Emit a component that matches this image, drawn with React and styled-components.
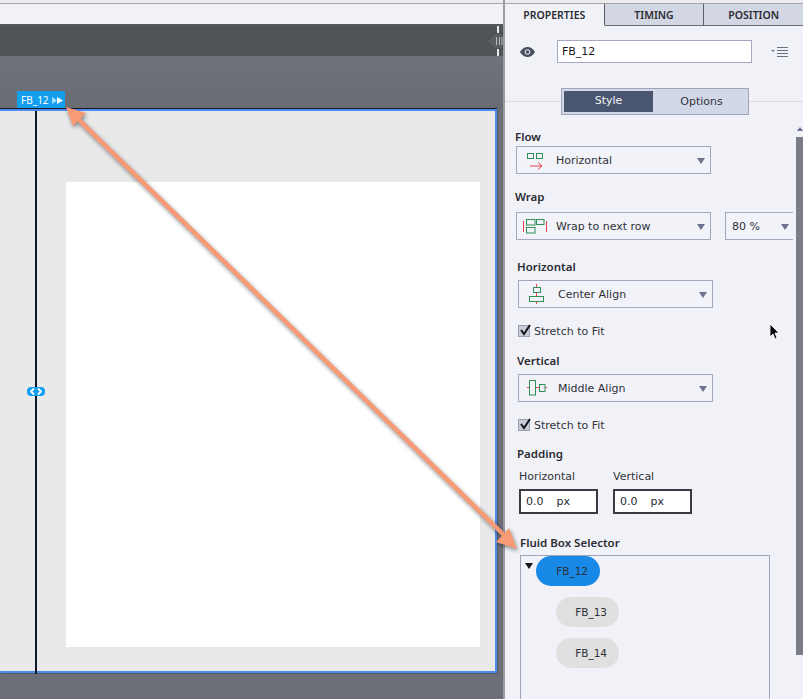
import styled, { createGlobalStyle } from "styled-components";

const GlobalStyle = createGlobalStyle`
  html, body {
    margin: 0;
    padding: 0;
    background: #6c6f77;
  }
  * {
    box-sizing: border-box;
  }
`;

const FONT = `"DejaVu Sans", "Noto Sans", "Liberation Sans", sans-serif`;
const HEADING_FONT = `"Noto Sans", "Open Sans", "Liberation Sans", sans-serif`;

const Page = styled.div`
  position: relative;
  width: 803px;
  height: 699px;
  display: flex;
  overflow: hidden;
  font-family: ${FONT};
  color: #2b2c33;
`;

const Stage = styled.div`
  width: 505px;
  display: flex;
  flex-direction: column;
  background: #6c6f77;
  border-right: 2px solid #999ba1;
`;

const TopStrip = styled.div`
  height: 26px;
  background: linear-gradient(#ececef 0 3px, #a5a6aa 3px 4px, #f1f2f7 4px);
  border-bottom: 2px solid #55585c;
`;

const DarkBar = styled.div`
  position: relative;
  height: 30px;
  background: #505357;
`;

const CollapseHandle = styled.svg`
  position: absolute;
  right: 0;
  top: 0;
`;

const Ruler = styled.div`
  height: 53px;
  background: linear-gradient(#6f7279, #696c73);
  position: relative;
`;

const FlexTag = styled.div`
  position: absolute;
  left: 17px;
  bottom: 0;
  width: 48px;
  height: 18px;
  display: flex;
  align-items: center;
  gap: 3px;
  padding-left: 4px;
  background: #139fee;
  color: #fff;
  font-family: ${HEADING_FONT};
  font-size: 10px;
`;

const Canvas = styled.div`
  position: relative;
  width: 497px;
  height: 564px;
  background: #e9e9e9;
  border: solid #4f8cf2;
  border-width: 2px 2px 2px 0;
  box-shadow: 0 -1px 0 #15181f, 1px 1px 0 #55585f;
  padding: 71px 15px 24px 66px;
`;

const Artboard = styled.div`
  width: 100%;
  height: 100%;
  background: #fff;
`;

const Guide = styled.div`
  position: absolute;
  left: 35px;
  top: 0;
  bottom: -3px;
  width: 2px;
  background: #0e1a2b;
`;

const GuideKnob = styled.svg`
  position: absolute;
  left: 27px;
  top: 276px;
`;

const Panel = styled.div`
  position: relative;
  width: 298px;
  display: flex;
  flex-direction: column;
  background: #f1f2f8;
  & > * {
    flex-shrink: 0;
  }
`;

const Tabs = styled.div`
  display: flex;
  height: 26px;
  padding-top: 3px;
  background: #ececef;
`;

const Tab = styled.div`
  flex: 1;
  display: flex;
  align-items: center;
  justify-content: center;
  font-family: ${HEADING_FONT};
  font-size: 10.5px;
  font-weight: 600;
  background: ${(p) => (p.$active ? "#f1f2f8" : "#d3d7e4")};
  border-top: 1px solid #a5a6aa;
  border-right: 1px solid #5e6066;
  border-bottom: 1px solid ${(p) => (p.$active ? "#f1f2f8" : "#6b6d75")};
  &:last-child {
    border-right: 0;
  }
`;

const NameRow = styled.div`
  display: flex;
  align-items: flex-start;
  height: 62px;
  padding: 14px 0 0 15px;
`;

const EyeIcon = styled.svg`
  margin: 7px 22px 0 0;
`;

const NameInput = styled.div`
  width: 195px;
  height: 23px;
  display: flex;
  align-items: center;
  padding-left: 4px;
  background: #fff;
  border: 1px solid #a3a8be;
  font-size: 11px;
  color: #16171c;
`;

const MenuIcon = styled.svg`
  margin: 7px 0 0 19px;
`;

const SegmentRow = styled.div`
  position: relative;
  display: flex;
  justify-content: center;
  margin-left: 56px;
  &::before {
    content: "";
    position: absolute;
    left: -56px;
    right: 0;
    top: 13px;
    height: 1px;
    background: #dcdde2;
  }
`;

const Segmented = styled.div`
  position: relative;
  width: 188px;
  height: 27px;
  margin-right: 54px;
  display: flex;
  padding: 2px;
  background: #d3d8e9;
  border: 1px solid #a0a5bc;
`;

const Segment = styled.div`
  flex: ${(p) => (p.$active ? "0 0 89px" : 1)};
  display: flex;
  align-items: center;
  justify-content: center;
  padding-bottom: ${(p) => (p.$active ? 2 : 0)}px;
  padding-left: ${(p) => (p.$active ? 0 : 4)}px;
  font-size: 11px;
  background: ${(p) => (p.$active ? "#4a556f" : "transparent")};
  color: ${(p) => (p.$active ? "#f2f3f7" : "#33353d")};
`;

const Label = styled.div`
  height: 14px;
  line-height: 14px;
  margin-top: ${(p) => p.$top}px;
  margin-left: ${(p) => p.$left}px;
  font-family: ${HEADING_FONT};
  font-size: 11.5px;
  font-weight: 600;
  color: #2a2b32;
`;

const ControlRow = styled.div`
  display: flex;
  gap: 14px;
  margin-top: ${(p) => p.$top}px;
  margin-left: ${(p) => p.$left}px;
`;

const Select = styled.div`
  position: relative;
  width: ${(p) => p.$width}px;
  height: 28px;
  display: flex;
  align-items: center;
  padding-left: ${(p) => p.$pad}px;
  background: #f2f3f8;
  border: 1px solid #a3a8be;
  border-right-width: ${(p) => (p.$open ? 0 : 1)}px;
  font-size: 11px;
  color: #2f3038;
  &::after {
    content: "";
    position: absolute;
    right: ${(p) => (p.$open ? 4 : 5)}px;
    top: 11px;
    border: 4px solid transparent;
    border-top: 6px solid #6c7290;
    border-bottom: 0;
  }
`;

const SelectIcon = styled.svg`
  flex: none;
  margin-right: ${(p) => p.$gap}px;
`;

const CheckRow = styled.div`
  display: flex;
  align-items: center;
  gap: 4px;
  height: 12px;
  margin-top: 17px;
  margin-left: 13px;
  font-size: 11px;
  color: #33343b;
`;

const CheckBox = styled.div`
  position: relative;
  width: 12px;
  height: 12px;
  background: #c9ccd8;
  border: 1px solid #9b9fb2;
`;

const CheckMark = styled.svg`
  position: absolute;
  left: -1px;
  top: -3px;
`;

const PaddingRow = styled.div`
  display: flex;
  gap: 15px;
  margin-top: 9px;
  margin-left: 14px;
`;

const PaddingField = styled.div`
  width: 79px;
`;

const SubLabel = styled.div`
  height: 14px;
  line-height: 14px;
  font-size: 11px;
  color: #33343b;
`;

const PaddingInput = styled.div`
  display: flex;
  align-items: center;
  gap: 13px;
  height: 25px;
  margin-top: 5px;
  padding-left: 5px;
  background: #fff;
  border: 2px solid #3a3b40;
  font-size: 11px;
  color: #2b2c33;
`;

const Tree = styled.div`
  position: relative;
  width: 250px;
  height: 200px;
  margin-top: 5px;
  margin-left: 15px;
  padding-left: 15px;
  border: 1px solid #a0a5bc;
  display: flex;
  flex-direction: column;
  gap: 11px;
`;

const TreeToggle = styled.div`
  position: absolute;
  left: 4px;
  top: 7px;
  border: 4px solid transparent;
  border-top: 6px solid #16171c;
  border-bottom: 0;
`;

const Pill = styled.div`
  width: ${(p) => (p.$selected ? 64 : 63)}px;
  height: 30px;
  margin-left: ${(p) => (p.$selected ? 0 : 20)}px;
  display: flex;
  align-items: center;
  justify-content: flex-end;
  padding-right: 12px;
  border-radius: 15px;
  background: ${(p) => (p.$selected ? "#1989e8" : "#e0e0e1")};
  font-size: 10.5px;
  color: #2d3036;
`;

const Scrollbar = styled.div`
  position: absolute;
  right: 0;
  top: 137px;
  width: 7px;
  height: 518px;
  background: #7b7d85;
  &::before {
    content: "";
    position: absolute;
    left: 1px;
    top: -10px;
    border: 3px solid transparent;
    border-bottom: 4px solid #6c7290;
    border-top: 0;
  }
`;

const Overlay = styled.svg`
  position: absolute;
  left: 0;
  top: 0;
  pointer-events: none;
  filter: drop-shadow(1px 2px 2px rgba(0, 0, 0, 0.45));
`;

const Cursor = styled.svg`
  position: absolute;
  left: 769px;
  top: 323px;
`;

const GREEN = "#2f8f55";
const RED = "#f0404f";

const FlowGlyph = () => (
  <SelectIcon $gap={12} width="18" height="20" viewBox="0 0 18 20" fill="none">
    <rect x="1.5" y="3.5" width="6" height="5" stroke={GREEN} />
    <rect x="10.5" y="3.5" width="6" height="5" stroke={GREEN} />
    <path d="M4 16h12M12 12.500l4 3.500-4 3.500" stroke={RED} />
  </SelectIcon>
);

const WrapGlyph = () => (
  <SelectIcon $gap={8} width="26" height="16" viewBox="0 0 26 16" fill="none">
    <path d="M1.500 3v11M24.500 3v11" stroke={RED} />
    <rect x="4.5" y="1.5" width="8.5" height="5.5" stroke={GREEN} />
    <rect x="14.5" y="1.5" width="7.5" height="5" stroke={GREEN} />
    <rect x="4.5" y="9.5" width="8.5" height="5.5" stroke={GREEN} />
  </SelectIcon>
);

const CenterGlyph = () => (
  <SelectIcon $gap={13} width="17" height="22" viewBox="0 0 17 22" fill="none">
    <path d="M8.500 1v20" stroke={RED} />
    <rect x="5.5" y="4.5" width="7" height="5" fill="#f2f3f8" stroke={GREEN} />
    <rect x="1.5" y="13.5" width="14" height="5" fill="#f2f3f8" stroke={GREEN} />
  </SelectIcon>
);

const MiddleGlyph = () => (
  <SelectIcon $gap={11} width="20" height="16" viewBox="0 0 20 16" fill="none">
    <path d="M0 7.500h20" stroke={RED} />
    <rect x="2.5" y="0.5" width="6" height="14.5" fill="#f2f3f8" stroke={GREEN} />
    <rect x="12.5" y="4.5" width="5.5" height="7" fill="#f2f3f8" stroke={GREEN} />
  </SelectIcon>
);

const Stretch = () => (
  <CheckRow>
    <CheckBox>
      <CheckMark width="14" height="14" viewBox="0 0 14 14" fill="none">
        <path d="M3 7l3 4 6-9" stroke="#15161b" strokeWidth="2" />
      </CheckMark>
    </CheckBox>
    Stretch to Fit
  </CheckRow>
);

export default function App() {
  return (
    <Page>
      <GlobalStyle />
      <Stage>
        <TopStrip />
        <DarkBar>
          <CollapseHandle width="16" height="30" viewBox="0 0 16 30" fill="none">
            <path d="M0 15l7-8h9v16H7z" fill="#5a5d62" stroke="#45474b" />
            <path d="M11 0v7M11 23v7" stroke="#e9e9ea" strokeWidth="2" />
            <path d="M9.500 11v8M12.500 11v8M15 11v8" stroke="#b5b7ba" />
          </CollapseHandle>
        </DarkBar>
        <Ruler>
          <FlexTag>
            FB_12
            <svg width="11" height="7" viewBox="0 0 11 7">
              <path d="M0 0l5 3.500L0 7z" fill="#a9dcf9" />
              <path d="M5 0l6 3.500L5 7z" fill="#fff" />
            </svg>
          </FlexTag>
        </Ruler>
        <Canvas>
          <Artboard />
          <Guide />
          <GuideKnob width="18" height="9" viewBox="0 0 18 9" fill="none">
            <rect width="18" height="9" rx="4" fill="#139fee" />
            <path d="M7 1.500L4 4.500l3 3M11 1.500l3 3-3 3" stroke="#fff" strokeWidth="1.800" />
          </GuideKnob>
        </Canvas>
      </Stage>

      <Panel>
        <Tabs>
          <Tab $active>PROPERTIES</Tab>
          <Tab>TIMING</Tab>
          <Tab>POSITION</Tab>
        </Tabs>
        <NameRow>
          <EyeIcon width="15" height="10" viewBox="0 0 15 10">
            <path d="M0 5c2-3.400 4.500-5 7.500-5S13 1.600 15 5c-2 3.400-4.500 5-7.500 5S2 8.400 0 5z" fill="#47505f" />
            <circle cx="7.500" cy="5" r="2.800" fill="#d9dbe2" />
            <circle cx="7.500" cy="5" r="1.700" fill="#47505f" />
          </EyeIcon>
          <NameInput>FB_12</NameInput>
          <MenuIcon width="17" height="12" viewBox="0 0 17 12" fill="none">
            <path d="M0 3h4L2 5z" fill="#6c7290" />
            <path d="M6 .5h11M6 3.500h11M6 6.500h11M6 9.500h11" stroke="#6c7180" />
          </MenuIcon>
        </NameRow>
        <SegmentRow>
          <Segmented>
            <Segment $active>Style</Segment>
            <Segment>Options</Segment>
          </Segmented>
        </SegmentRow>

        <Label $top={15} $left={10}>Flow</Label>
        <ControlRow $top={2} $left={11}>
          <Select $width={195} $pad={9}>
            <FlowGlyph />
            Horizontal
          </Select>
        </ControlRow>

        <Label $top={16} $left={10}>Wrap</Label>
        <ControlRow $top={8} $left={11}>
          <Select $width={195} $pad={5}>
            <WrapGlyph />
            Wrap to next row
          </Select>
          <Select $width={68} $pad={6} $open>80 %</Select>
        </ControlRow>

        <Label $top={20} $left={12}>Horizontal</Label>
        <ControlRow $top={6} $left={13}>
          <Select $width={195} $pad={9}>
            <CenterGlyph />
            Center Align
          </Select>
        </ControlRow>
        <Stretch />

        <Label $top={17} $left={12}>Vertical</Label>
        <ControlRow $top={6} $left={13}>
          <Select $width={195} $pad={8}>
            <MiddleGlyph />
            Middle Align
          </Select>
        </ControlRow>
        <Stretch />

        <Label $top={16} $left={12}>Padding</Label>
        <PaddingRow>
          <PaddingField>
            <SubLabel>Horizontal</SubLabel>
            <PaddingInput>
              <span>0.0</span>
              <span>px</span>
            </PaddingInput>
          </PaddingField>
          <PaddingField>
            <SubLabel>Vertical</SubLabel>
            <PaddingInput>
              <span>0.0</span>
              <span>px</span>
            </PaddingInput>
          </PaddingField>
        </PaddingRow>

        <Label $top={22} $left={15}>Fluid Box Selector</Label>
        <Tree>
          <TreeToggle />
          <Pill $selected>FB_12</Pill>
          <Pill>FB_13</Pill>
          <Pill>FB_14</Pill>
        </Tree>
        <Scrollbar />
      </Panel>

      <Overlay width="803" height="699" viewBox="0 0 803 699" fill="none">
        <path d="M76 117L507 538" stroke="#f79a75" strokeWidth="4.500" />
        <path d="M66 107L86 113 73 126z" fill="#f79a75" />
        <path d="M517 549L496 542 509 528z" fill="#f79a75" />
      </Overlay>
      <Cursor width="12" height="18" viewBox="0 0 12 18">
        <path d="M1 1v13l3-3 2 5 2-1-2-5h4z" fill="#0d0d0f" stroke="#fff" strokeWidth="0.800" />
      </Cursor>
    </Page>
  );
}
